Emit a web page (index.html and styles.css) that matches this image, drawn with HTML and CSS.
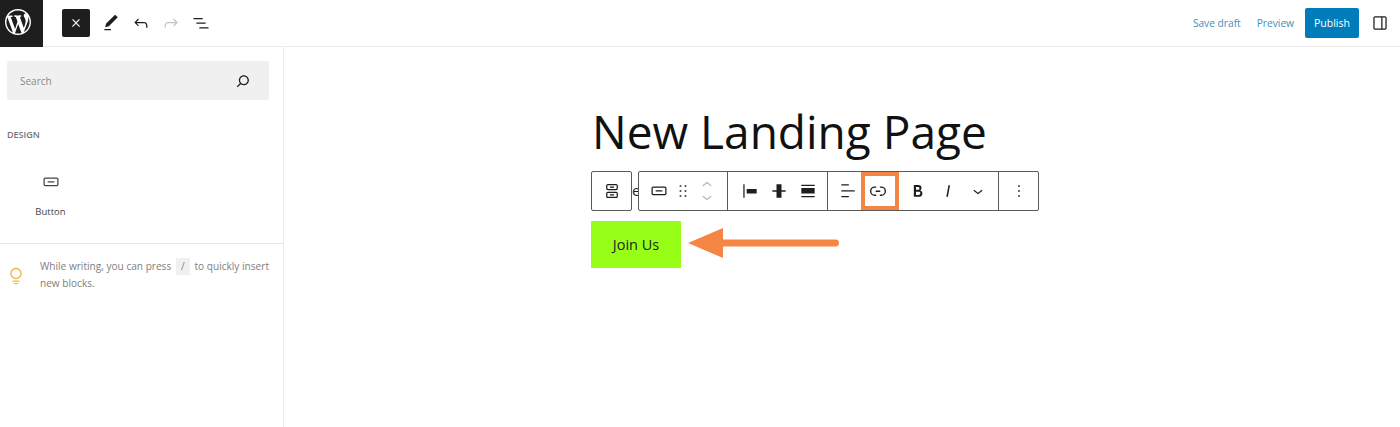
FILE: index.html
```html
<!DOCTYPE html>
<html lang="en">
<head>
    <meta charset="UTF-8">
    <meta name="viewport" content="width=device-width, initial-scale=1.0">
    <title>New Landing Page</title>
    <link rel="stylesheet" href="styles.css">
</head>
<body>
    <header class="topbar">
        <div class="wp-logo">
            <svg width="26" height="26" viewBox="0 0 20 20"><path d="M20 10c0-5.51-4.49-10-10-10C4.48 0 0 4.49 0 10c0 5.52 4.48 10 10 10 5.51 0 10-4.48 10-10zM7.78 15.37L4.37 6.22c.55-.02 1.17-.08 1.17-.08.5-.06.44-1.13-.06-1.11 0 0-1.45.11-2.37.11-.18 0-.37 0-.58-.01C4.12 2.69 6.87 1.11 10 1.11c2.33 0 4.45.87 6.05 2.34-.68-.11-1.65.39-1.65 1.58 0 .74.45 1.36.9 2.1.35.61.55 1.36.55 2.46 0 1.49-1.4 5-1.4 5l-3.03-8.37c.54-.02.82-.17.82-.17.5-.05.44-1.25-.06-1.22 0 0-1.44.12-2.38.12-.87 0-2.33-.12-2.33-.12-.5-.03-.56 1.2-.06 1.22l.92.08 1.26 3.41zM17.41 10c.24-.64.74-1.87.43-4.25.7 1.29 1.05 2.71 1.05 4.25 0 3.29-1.73 6.24-4.4 7.78.97-2.59 1.94-5.2 2.92-7.78zM6.1 18.09C3.12 16.65 1.11 13.53 1.11 10c0-1.3.23-2.48.72-3.59C3.25 10.3 4.67 14.2 6.1 18.09zm4.03-6.63l2.58 6.98c-.86.29-1.76.45-2.71.45-.79 0-1.57-.11-2.29-.33.81-2.38 1.62-4.74 2.42-7.1z"/></svg>
        </div>
        <div class="tools">
            <button class="close-btn">
                <svg width="12" height="12" viewBox="0 0 24 24"><path d="M13 11.8l6.1-6.3-1-1-6.1 6.2-6.1-6.2-1 1 6.1 6.3-6.5 6.700 1 1 6.5-6.6 6.5 6.6 1-1z"/></svg>
            </button>
            <span class="tool"><svg width="20" height="20" viewBox="0 0 24 24"><path d="M20.1 5.1L16.9 2 6.2 12.7l-1.3 4.4 4.5-1.3L20.1 5.1zM4 20.8h8v-1.5H4v1.5z"/></svg></span>
            <span class="tool"><svg width="20" height="20" viewBox="0 0 24 24"><path d="M18.3 11.7c-.6-.6-1.4-.9-2.3-.9H6.7l2.9-3.3-1.1-1-4.5 5L8.5 16l1-1-2.7-2.7H16c.5 0 .9.2 1.3.5 1 1 1 3.4 1 4.5v.3h1.5v-.2c0-1.500 0-4.300-1.500-5.700z"/></svg></span>
            <span class="tool tool-off"><svg width="20" height="20" viewBox="0 0 24 24"><path d="M15.6 6.5l-1.1 1 2.9 3.3H8c-.9 0-1.7.3-2.3.9-1.4 1.5-1.4 4.2-1.4 5.6v.2h1.5v-.3c0-1.1 0-3.5 1-4.5.3-.3.7-.5 1.3-.5h9.2L14.5 15l1.1 1.1 4.6-4.6-4.6-5z"/></svg></span>
            <span class="tool"><svg width="20" height="20" viewBox="0 0 24 24"><path d="M3 6h11v1.5H3V6zm3.500 5.500h11V13h-11v-1.500zM21 17H10v1.500h11V17z"/></svg></span>
        </div>
        <div class="actions">
            <a class="action-link save-link">Save draft</a>
            <a class="action-link">Preview</a>
            <button class="publish">Publish</button>
            <svg class="sidebar-toggle" width="20" height="20" viewBox="0 0 24 24"><path d="M18 4H6c-1.1 0-2 .9-2 2v12c0 1.1.9 2 2 2h12c1.1 0 2-.9 2-2V6c0-1.1-.9-2-2-2zM6 5.5h7.5v13H6c-.3 0-.5-.2-.5-.5V6c0-.3.2-.5.5-.5zM18.5 18c0 .3-.2.5-.5.5h-3v-13h3c.3 0 .5.2.5.5v12z"/></svg>
        </div>
    </header>

    <div class="layout">
        <aside class="inserter">
            <div class="inserter-top">
                <div class="search">
                    <span>Search</span>
                    <svg width="20" height="20" viewBox="0 0 24 24"><path d="M13 5c-3.3 0-6 2.7-6 6 0 1.4.5 2.7 1.3 3.7l-3.8 3.8 1.1 1.1 3.8-3.8c1 .8 2.3 1.3 3.7 1.3 3.3 0 6-2.7 6-6S16.3 5 13 5zm0 10.5c-2.5 0-4.5-2-4.5-4.5s2-4.5 4.5-4.5 4.5 2 4.5 4.5-2 4.5-4.5 4.5z"/></svg>
                </div>
                <div class="group-title">DESIGN</div>
                <div class="block-item">
                    <svg width="20" height="20" viewBox="0 0 24 24"><path d="M8 12.5h8V11H8v1.5Z M19 6.5H5a2 2 0 0 0-2 2V15a2 2 0 0 0 2 2h14a2 2 0 0 0 2-2V8.5a2 2 0 0 0-2-2ZM5 8h14a.5.5 0 0 1 .5.5V15a.5.5 0 0 1-.01.1.5.5 0 0 1-.49.4H5a.5.5 0 0 1-.5-.5V8.5A.5.5 0 0 1 5 8Z"/></svg>
                    <span>Button</span>
                </div>
            </div>
            <div class="tip">
                <svg width="20" height="20" viewBox="0 0 24 24"><path d="M12 15.8c-3.7 0-6.8-3-6.8-6.8s3-6.8 6.8-6.8c3.700 0 6.800 3 6.800 6.800s-3.100 6.800-6.800 6.800zm0-12C9.100 3.800 6.800 6.100 6.800 9s2.400 5.200 5.200 5.200c2.900 0 5.200-2.400 5.200-5.200S14.900 3.800 12 3.800zM8 17.500h8V19H8zM10 20.500h4V22h-4z"/></svg>
                <p>While writing, you can press <kbd>/</kbd> to quickly insert new blocks.</p>
            </div>
        </aside>

        <main class="canvas">
            <h1>New Landing Page</h1>

            <div class="toolbar-row">
                <div class="parent-btn">
                    <svg width="20" height="20" viewBox="0 0 24 24"><path d="M14.5 17.5H9.5V16H14.5V17.5Z M14.5 8H9.5V6.5H14.5V8Z M7 3.5H17C18.1046 3.5 19 4.39543 19 5.5V9C19 10.1046 18.1046 11 17 11H7C5.89543 11 5 10.1046 5 9V5.5C5 4.39543 5.89543 3.5 7 3.5ZM17 5H7C6.72386 5 6.5 5.22386 6.5 5.5V9C6.5 9.27614 6.72386 9.5 7 9.5H17C17.2761 9.5 17.5 9.27614 17.5 9V5.5C17.5 5.22386 17.2761 5 17 5Z M7 13H17C18.1046 13 19 13.8954 19 15V18.5C19 19.6046 18.1046 20.5 17 20.5H7C5.89543 20.5 5 19.6046 5 18.5V15C5 13.8954 5.89543 13 7 13ZM17 14.5H7C6.72386 14.5 6.5 14.7239 6.5 15V18.5C6.5 18.7761 6.72386 19 7 19H17C17.2761 19 17.5 18.7761 17.5 18.5V15C17.5 14.7239 17.2761 14.5 17 14.5Z"/></svg>
                </div>
                <span class="peek">e</span>
                <div class="toolbar">
                    <div class="section section-block">
                        <span class="tb-btn"><svg width="20" height="20" viewBox="0 0 24 24"><path d="M8 12.5h8V11H8v1.5Z M19 6.5H5a2 2 0 0 0-2 2V15a2 2 0 0 0 2 2h14a2 2 0 0 0 2-2V8.5a2 2 0 0 0-2-2ZM5 8h14a.5.5 0 0 1 .5.5V15a.5.5 0 0 1-.01.1.5.5 0 0 1-.49.4H5a.5.5 0 0 1-.5-.5V8.5A.5.5 0 0 1 5 8Z"/></svg></span>
                        <span class="tb-btn"><svg width="20" height="20" viewBox="0 0 24 24"><path d="M8 7h2V5H8v2zm0 6h2v-2H8v2zm0 6h2v-2H8v2zm6-14v2h2V5h-2zm0 8h2v-2h-2v2zm0 6h2v-2h-2v2z"/></svg></span>
                        <span class="movers">
                            <svg width="20" height="12" viewBox="0 5 24 14"><path d="M6.500 12.400L12 8l5.500 4.400-.9 1.200L12 10l-4.500 3.600-1-1.200z"/></svg>
                            <svg width="20" height="12" viewBox="0 5 24 14"><path d="M17.500 11.600L12 16l-5.500-4.400.9-1.200L12 14l4.500-3.600 1 1.200z"/></svg>
                        </span>
                    </div>
                    <div class="section section-justify">
                        <span class="tb-btn"><svg width="20" height="20" viewBox="0 0 24 24"><path d="M4 4h1.500v16H4zM8 9.500h12v5.500H8z"/></svg></span>
                        <span class="tb-btn"><svg width="20" height="20" viewBox="0 0 24 24"><path d="M4 11.200h16v1.600H4zM9 4h6v16H9z"/></svg></span>
                        <span class="tb-btn"><svg width="20" height="20" viewBox="0 0 24 24"><path d="M4 4.500h16V6H4zM4 8.500h16V15H4zM4 18h16v1.500H4z"/></svg></span>
                    </div>
                    <div class="section section-format">
                        <span class="tb-btn tb-align"><svg width="20" height="20" viewBox="0 0 24 24"><path d="M13 5.500H4V4h9v1.500Zm7 7H4V11h16v1.500Zm-7 7H4V18h9v1.500Z"/></svg></span>
                        <span class="tb-btn tb-link"><svg width="22" height="22" viewBox="0 0 24 24"><path d="M10 17.389H8.444A5.194 5.194 0 1 1 8.444 7H10v1.5H8.444a3.694 3.694 0 0 0 0 7.389H10v1.5ZM14 7h1.556a5.194 5.194 0 0 1 0 10.39H14v-1.5h1.556a3.694 3.694 0 0 0 0-7.39H14V7Zm-4.5 6h5v-1.5h-5V13Z"/></svg></span>
                        <span class="tb-btn"><svg width="20" height="20" viewBox="0 0 24 24"><path d="M14.7 11.3c1-.6 1.5-1.6 1.5-3 0-2.3-1.3-3.4-4-3.4H7v14h5.8c1.4 0 2.5-.3 3.3-1 .8-.7 1.2-1.7 1.2-2.9.1-1.9-.8-3.1-2.6-3.7zm-5.1-4h2.3c.6 0 1.1.1 1.4.4.3.3.5.7.5 1.2s-.2 1-.5 1.2c-.3.3-.8.4-1.4.4H9.6V7.3zm4.6 9c-.4.3-1 .4-1.7.4H9.6v-3.9h2.9c.7 0 1.3.2 1.7.5.4.3.6.8.6 1.5s-.2 1.2-.6 1.5z"/></svg></span>
                        <span class="tb-btn"><svg width="20" height="20" viewBox="0 0 24 24"><path d="M12.5 5L10 19h1.9l2.5-14z"/></svg></span>
                        <span class="tb-btn"><svg width="20" height="20" viewBox="0 0 24 24"><path d="M17.5 11.6L12 16l-5.500-4.400.9-1.200L12 14l4.500-3.600 1 1.200z"/></svg></span>
                    </div>
                    <div class="section section-more">
                        <span class="tb-btn"><svg width="20" height="20" viewBox="0 0 24 24"><path d="M13 19h-2v-2h2v2zm0-6h-2v-2h2v2zm0-6h-2V5h2v2z"/></svg></span>
                    </div>
                </div>
            </div>

            <div class="button-row">
                <a class="join-btn">Join Us</a>
                <svg class="arrow" width="151" height="32" viewBox="0 0 151 32">
                    <path d="M0 16L35 1v11.500h112.500a3.500 3.500 0 0 1 0 7H35V31z"/>
                </svg>
            </div>
        </main>
    </div>
</body>
</html>
```

FILE: styles.css
```css
* {
    box-sizing: border-box;
}

body {
    font-family: 'Open Sans', 'Noto Sans', sans-serif;
    margin: 0;
    padding: 0;
    height: 427px;
    overflow: hidden;
    background-color: white;
    color: #1e1e1e;
}

svg {
    display: block;
    fill: currentColor;
}

.topbar {
    display: flex;
    align-items: center;
    height: 47px;
    border-bottom: 1px solid #ececec;
}

.wp-logo {
    width: 43px;
    height: 47px;
    padding: 9px 0 0 5px;
    background-color: #1e1e1e;
    color: white;
}

.tools {
    display: flex;
    align-items: center;
    margin-left: 19px;
}

.close-btn {
    display: flex;
    align-items: center;
    justify-content: center;
    width: 28px;
    height: 28px;
    padding: 0;
    border: none;
    border-radius: 2px;
    background-color: #1e1e1e;
    color: white;
}

.close-btn svg {
    stroke: white;
    stroke-width: 1;
}

.tool {
    width: 30px;
    display: flex;
    justify-content: center;
}

.tools .close-btn + .tool {
    margin-left: 6px;
}

.tool-off {
    color: #c4c4c4;
}

.actions {
    display: flex;
    align-items: center;
    margin-left: auto;
    padding-right: 10px;
}

.action-link {
    font-size: 10.200px;
    color: #3f8fbd;
    margin-right: 11px;
}

.save-link {
    margin-right: 16px;
}

.publish {
    width: 54px;
    height: 30px;
    padding: 0;
    border: none;
    border-radius: 2px;
    background-color: #007cba;
    color: white;
    font-family: inherit;
    font-size: 10.500px;
    font-weight: 500;
}

.sidebar-toggle {
    margin-left: 11px;
}

.layout {
    display: flex;
    height: 380px;
}

.inserter {
    width: 284px;
    flex-shrink: 0;
    border-right: 1px solid #ececec;
}

.inserter-top {
    height: 197px;
    padding: 14px 14px 0 7px;
    border-bottom: 1px solid #e6e6e6;
}

.search {
    display: flex;
    align-items: center;
    justify-content: space-between;
    height: 39px;
    padding: 0 16px 0 13px;
    background-color: #f0f0f0;
    border-radius: 2px;
    font-size: 10px;
    color: #8a8a8a;
}

.search svg {
    color: #1e1e1e;
}

.group-title {
    margin-top: 28px;
    font-size: 9px;
    font-weight: 600;
    line-height: 14px;
    color: #757575;
}

.block-item {
    display: flex;
    flex-direction: column;
    align-items: center;
    width: 87px;
    margin: 30px 0 0 0;
    font-size: 9.500px;
    color: #444;
}

.block-item span {
    margin-top: 13px;
}

.tip {
    display: flex;
    padding: 14px 12px 0 6px;
}

.tip svg {
    margin-top: 8px;
    color: #f0b849;
    flex-shrink: 0;
}

.tip p {
    margin: 0 0 0 14px;
    font-size: 10.100px;
    line-height: 17px;
    color: #808080;
}

.tip kbd {
    display: inline-block;
    width: 14px;
    margin: 0 2px;
    text-align: center;
    background-color: #f0f0f0;
    font-family: inherit;
}

.canvas {
    flex: 1;
    padding: 0 0 0 307px;
}

h1 {
    margin: 47px 0 2px 1px;
    font-size: 46px;
    font-weight: 400;
    line-height: 75px;
    color: #111;
}

.toolbar-row {
    display: flex;
    align-items: stretch;
    height: 40px;
}

.parent-btn {
    display: flex;
    align-items: center;
    justify-content: center;
    width: 41px;
    border: 1px solid #5a5a5a;
    border-radius: 2px;
}

.peek {
    width: 6px;
    overflow: hidden;
    font-size: 15px;
    line-height: 38px;
}

.toolbar {
    display: flex;
    width: 401px;
    border: 1px solid #5a5a5a;
    border-radius: 2px;
}

.section {
    display: flex;
    align-items: center;
    border-right: 1px solid #5a5a5a;
}

.section:last-child {
    border-right: none;
}

.tb-btn {
    display: flex;
    justify-content: center;
}

.section-block {
    width: 89px;
    padding-left: 8px;
}

.section-block .tb-btn,
.movers {
    width: 24px;
}

.movers {
    display: flex;
    flex-direction: column;
    align-items: center;
    color: #b5b5b5;
}

.section-justify {
    width: 100px;
    padding-left: 7px;
}

.section-justify .tb-btn {
    width: 29px;
}

.section-format {
    width: 171px;
    padding-left: 7px;
}

.section-format .tb-btn {
    width: 30px;
}

.section-format .tb-align {
    width: 26px;
}

.section-format .tb-link {
    width: 38px;
    height: 38px;
    align-items: center;
    margin-right: 4px;
    padding-right: 4px;
    border: 4px solid #f58542;
}

.section-more {
    flex: 1;
    justify-content: center;
}

.button-row {
    display: flex;
    align-items: center;
    margin-top: 10px;
}

.join-btn {
    width: 90px;
    height: 47px;
    line-height: 47px;
    text-align: center;
    background-color: #97fe18;
    font-size: 14.500px;
    color: #1e1e1e;
}

.arrow {
    margin: 0 0 4px 7px;
    fill: #f58542;
}
```
